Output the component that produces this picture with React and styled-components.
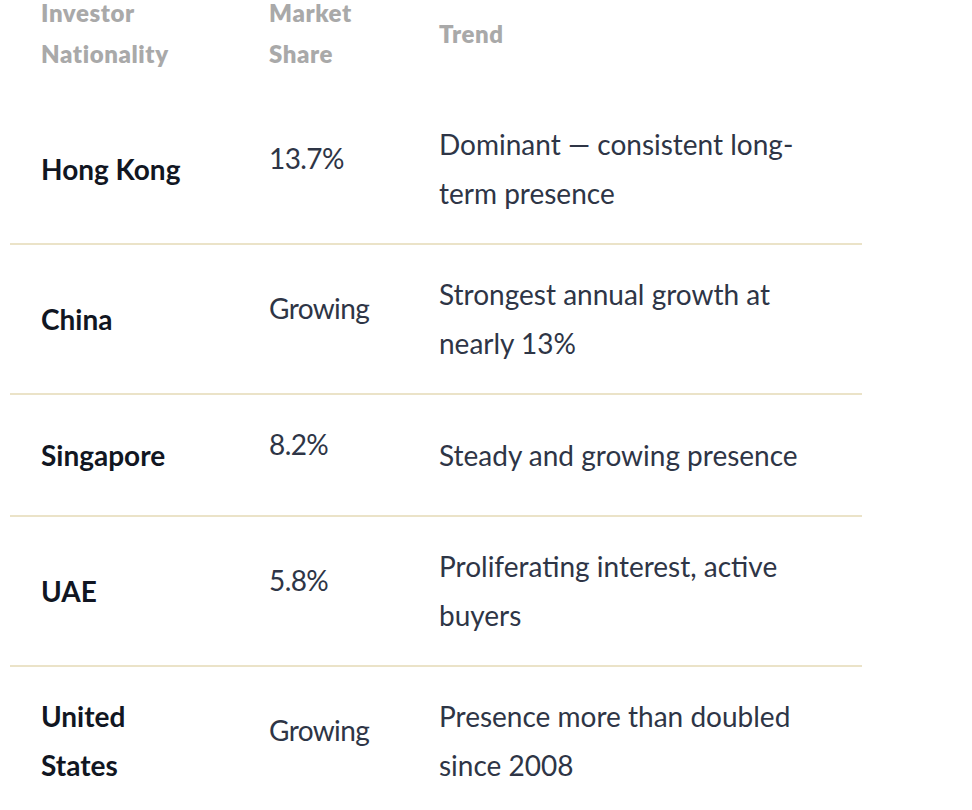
import React from "react";
import styled, { createGlobalStyle } from "styled-components";

const GlobalStyle = createGlobalStyle`
  html, body { margin: 0; padding: 0; background: #ffffff; }
  body {
    font-family: Lato, "Noto Sans", "Liberation Sans", sans-serif;
    overflow: hidden;
  }
`;

const Page = styled.div`
  padding: 0 0 0 10px;
  margin-top: -28px;
`;

const Table = styled.table`
  width: 852px;
  border-collapse: collapse;
  border-spacing: 0;
  table-layout: fixed;
`;

const Col = styled.col`
  width: ${(p) => p.$w}px;
`;

const HeadCell = styled.th`
  text-align: left;
  vertical-align: middle;
  padding: 20px 0 21px 31px;
  font-size: 24px;
  letter-spacing: 0.6px;
  line-height: 41px;
  font-weight: 800;
  color: #a9a9a9;
`;

const Row = styled.tr`
  border-bottom: 2px solid #ebe3c8;
`;

const Cell = styled.td`
  vertical-align: middle;
  padding: 25px 0 25px 31px;
  font-size: 28px;
  line-height: 49px;
  color: #2e3546;
  font-weight: ${(p) => (p.$strong ? 700 : 400)};
  ${(p) => p.$strong && "color: #111622;"}
`;

const Share = styled.div`
  padding-bottom: 21px;
  letter-spacing: -0.6px;
`;

const rows = [
  { name: ["Hong Kong"], share: "13.7%", trend: ["Dominant — consistent long-", "term presence"] },
  { name: ["China"], share: "Growing", trend: ["Strongest annual growth at", "nearly 13%"] },
  { name: ["Singapore"], share: "8.2%", trend: ["Steady and growing presence"] },
  { name: ["UAE"], share: "5.8%", trend: ["Proliferating interest, active", "buyers"] },
  { name: ["United", "States"], share: "Growing", trend: ["Presence more than doubled", "since 2008"] },
];

const Lines = ({ parts }) =>
  parts.map((t, i) => (
    <React.Fragment key={i}>
      {i > 0 && <br />}
      {t}
    </React.Fragment>
  ));

export default function App() {
  return (
    <>
      <GlobalStyle />
      <Page>
        <Table>
          <colgroup>
            <Col $w={228} />
            <Col $w={170} />
            <Col $w={454} />
          </colgroup>
          <thead>
            <tr>
              <HeadCell>Investor<br />Nationality</HeadCell>
              <HeadCell>Market<br />Share</HeadCell>
              <HeadCell>Trend</HeadCell>
            </tr>
          </thead>
          <tbody>
            {rows.map((r, i) => (
              <Row key={i}>
                <Cell $strong><Lines parts={r.name} /></Cell>
                <Cell><Share>{r.share}</Share></Cell>
                <Cell><Lines parts={r.trend} /></Cell>
              </Row>
            ))}
          </tbody>
        </Table>
      </Page>
    </>
  );
}
